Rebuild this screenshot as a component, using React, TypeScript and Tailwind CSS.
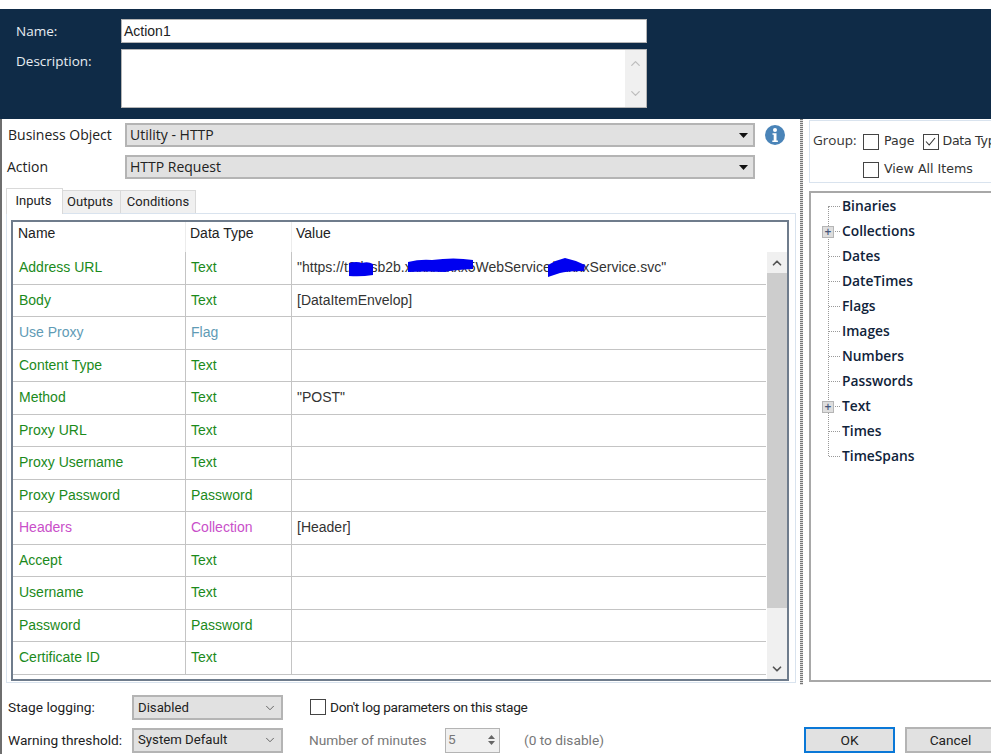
import React from 'react';
import { ChevronDown, ChevronUp } from 'lucide-react';

const rows = [
  { name: 'Address URL', type: 'Text', value: '"https://t2dcsb2b.xxxxxxxxx5WebService/xxxxxService.svc"', color: 'text-[#1b8a1b]' },
  { name: 'Body', type: 'Text', value: '[DataItemEnvelop]', color: 'text-[#1b8a1b]' },
  { name: 'Use Proxy', type: 'Flag', value: '', color: 'text-[#5f9bb5]' },
  { name: 'Content Type', type: 'Text', value: '', color: 'text-[#1b8a1b]' },
  { name: 'Method', type: 'Text', value: '"POST"', color: 'text-[#1b8a1b]' },
  { name: 'Proxy URL', type: 'Text', value: '', color: 'text-[#1b8a1b]' },
  { name: 'Proxy Username', type: 'Text', value: '', color: 'text-[#1b8a1b]' },
  { name: 'Proxy Password', type: 'Password', value: '', color: 'text-[#1b8a1b]' },
  { name: 'Headers', type: 'Collection', value: '[Header]', color: 'text-[#c94fc9]' },
  { name: 'Accept', type: 'Text', value: '', color: 'text-[#1b8a1b]' },
  { name: 'Username', type: 'Text', value: '', color: 'text-[#1b8a1b]' },
  { name: 'Password', type: 'Password', value: '', color: 'text-[#1b8a1b]' },
  { name: 'Certificate ID', type: 'Text', value: '', color: 'text-[#1b8a1b]' },
];

const tree = [
  { label: 'Binaries', plus: false },
  { label: 'Collections', plus: true },
  { label: 'Dates', plus: false },
  { label: 'DateTimes', plus: false },
  { label: 'Flags', plus: false },
  { label: 'Images', plus: false },
  { label: 'Numbers', plus: false },
  { label: 'Passwords', plus: false },
  { label: 'Text', plus: true },
  { label: 'Times', plus: false },
  { label: 'TimeSpans', plus: false },
];

const Caret = () => (
  <svg width="9" height="5" viewBox="0 0 9 5" className="shrink-0">
    <path d="M0 0h9L4.5 5z" fill="#111" />
  </svg>
);

const Combo = ({ label }: { label: string }) => (
  <div className="w-[630px] h-[24px] bg-[#e1e1e1] border-2 border-[#b4b4b4] flex items-center justify-between pl-[3px] pr-[5px] text-[14px] text-[#222]">
    <span className="pb-[2px]">{label}</span>
    <Caret />
  </div>
);

const FooterSelect = ({ label }: { label: string }) => (
  <div className="w-[151px] h-[25px] shrink-0 bg-[#e1e1e1] border-2 border-[#b4b4b4] flex items-center justify-between pl-[4px] pr-[4px] text-[13.2px] text-[#222]">
    <span>{label}</span>
    <ChevronDown size={14} strokeWidth={1.5} className="text-[#555]" />
  </div>
);

const Check = ({ checked }: { checked?: boolean }) => (
  <div className="w-[16px] h-[16px] border border-[#444] bg-white shrink-0 flex items-center justify-center">
    {checked && (
      <svg width="13" height="13" viewBox="0 0 13 13">
        <path d="M2 6.5l3.2 3.5L11 3" fill="none" stroke="#333" strokeWidth="1.1" />
      </svg>
    )}
  </div>
);

export default function App() {
  return (
    <div className="relative w-[991px] h-[754px] overflow-hidden bg-white text-[#222] font-['Open_Sans','Liberation_Sans',sans-serif]">
      {/* Header */}
      <div className="mt-[9px] h-[110px] bg-[#0f2b47] pl-[16px] pt-[10px] text-[13.5px] text-[#e8edf2]">
        <div className="flex items-center h-[24px]">
          <span className="w-[105px]">Name:</span>
          <div className="w-[526px] h-[24px] bg-white border border-[#b5b5b5] pl-[2px] text-[#222] text-[14px] leading-[22px] font-['Liberation_Sans',sans-serif]">Action1</div>
        </div>
        <div className="flex items-start mt-[6px]">
          <span className="w-[105px] pt-[2px]">Description:</span>
          <div className="w-[526px] h-[59px] bg-white border border-[#b5b5b5] flex justify-end">
            <div className="w-[21px] h-full bg-[#f0f0f0] flex flex-col items-center justify-between py-[6px] text-[#bdbdbd]">
              <ChevronUp size={15} strokeWidth={2} />
              <ChevronDown size={15} strokeWidth={2} />
            </div>
          </div>
        </div>
      </div>

      {/* Main */}
      <div className="flex h-[566px]">
        <div className="w-[800px] shrink-0 border-l-2 border-[#6e6e6e] pl-[3px] pt-[4px] relative">
          <div className="flex items-center">
            <span className="w-[120px] text-[14px] pl-[3px] pb-[2px]">Business Object</span>
            <Combo label="Utility - HTTP" />
            <svg width="20" height="20" viewBox="0 0 20 20" className="ml-[10px]">
              <circle cx="10" cy="10" r="10" fill="#4a84b8" />
              <circle cx="10" cy="5" r="2" fill="#fff" />
              <path d="M7.5 8.2h4v7.2h1.4v1.6H7.3v-1.6h1.4V9.8H7.5z" fill="#fff" />
            </svg>
          </div>
          <div className="flex items-center mt-[8px]">
            <span className="w-[120px] text-[14px] pl-[2px] pb-[2px]">Action</span>
            <Combo label="HTTP Request" />
          </div>

          {/* Tabs */}
          <div className="flex items-end h-[25px] mt-[9px] ml-[1px] text-[13px] relative z-10 font-['Roboto',sans-serif]">
            <div className="w-[57px] h-[26px] bg-white border border-b-0 border-[#d9d9d9] flex items-center justify-center pb-[2px] pr-[2px] -mb-[1px]">Inputs</div>
            <div className="w-[58px] h-[23px] bg-[#f0f0f0] border border-b-0 border-l-0 border-[#d9d9d9] flex items-center justify-center pr-[3px]">Outputs</div>
            <div className="w-[75px] h-[23px] bg-[#f0f0f0] border border-b-0 border-l-0 border-[#d9d9d9] flex items-center justify-center">Conditions</div>
          </div>

          {/* Panel */}
          <div className="w-[790px] h-[470px] ml-[1px] border border-[#d9e3ee] pl-[4px] pt-[6px] font-['Liberation_Sans',sans-serif] text-[14px]">
            <div className="relative w-[778px] h-[461px] border-2 border-[#6f7c8c] flex">
              <div className="w-[753px] shrink-0 overflow-hidden">
                <div className="flex h-[30px] items-center text-[#222]">
                  <span className="w-[173px] pl-[5px] h-full leading-[23px] border-r border-[#ececec]">Name</span>
                  <span className="w-[106px] pl-[4px] h-full leading-[23px] border-r border-[#ececec]">Data Type</span>
                  <span className="flex-1 pl-[4px] h-full leading-[23px]">Value</span>
                </div>
                {rows.map((row) => (
                  <div key={row.name} className="flex h-[32.5px] items-center border-b border-[#c4c4c4]">
                    <span className={`w-[173px] h-full pl-[6px] leading-[31px] border-r border-[#c4c4c4] ${row.color}`}>{row.name}</span>
                    <span className={`w-[106px] h-full pl-[5px] leading-[31px] border-r border-[#c4c4c4] ${row.color}`}>{row.type}</span>
                    <span className="flex-1 pl-[5px] h-full leading-[31px] text-[#333] whitespace-nowrap">{row.value}</span>
                  </div>
                ))}
              </div>
              <div className="ml-[1px] flex-1 flex flex-col mt-[30px] bg-[#f0f0f0]">
                <div className="h-[21px] flex items-center justify-center text-[#555]">
                  <ChevronUp size={14} strokeWidth={3} />
                </div>
                <div className="h-[335px] bg-[#cdcdcd]" />
                <div className="mt-auto h-[21px] flex items-center justify-center text-[#555]">
                  <ChevronDown size={14} strokeWidth={3} />
                </div>
              </div>
            </div>
          </div>
        </div>

        {/* Splitter */}
        <div className="w-[3px] h-[566px] bg-[repeating-linear-gradient(to_bottom,#777_0px,#777_1px,#ddd_1px,#ddd_2px)]" />

        {/* Right */}
        <div className="flex-1 pl-[6px] pt-[1px] min-w-0">
          <div className="w-[200px] h-[63px] border border-[#d9e3ee] pl-[3px] pt-[9px] text-[12.6px] font-['DejaVu_Sans',sans-serif] text-[#333]">
            <div className="flex items-center gap-[5px]">
              <span className="w-[44px] text-[13.5px] font-['Open_Sans',sans-serif] pb-[3px] mr-[1px]">Group:</span>
              <Check />
              <span className="pb-[1px]">Page</span>
              <span className="ml-[3px]"><Check checked /></span>
              <span className="whitespace-nowrap -ml-[1px] pb-[1px] tracking-[-0.3px]">Data Type</span>
            </div>
            <div className="flex items-center gap-[5px] mt-[7px] ml-[50px]">
              <Check />
              <span className="whitespace-nowrap pb-[1px]">View All Items</span>
            </div>
          </div>
          <div className="relative w-[200px] h-[491px] mt-[8px] border-2 border-[#a8a8a8] pt-[1px]">
            <div className="absolute left-[17px] top-[13px] h-[250px] border-l border-dotted border-[#999]" />
            {tree.map((item) => (
              <div key={item.label} className="relative flex items-center h-[25px] pl-[31px] text-[13.8px] font-semibold text-[#10233a]">
                <span className="absolute left-[18px] top-[12px] w-[11px] border-t border-dotted border-[#999]" />
                {item.plus && (
                  <span className="absolute left-[11px] top-[7px] w-[12px] h-[12px] bg-[#dedede] border border-[#b5b5b5] flex items-center justify-center text-[#44557a] text-[12px] leading-none">+</span>
                )}
                <span>{item.label}</span>
              </div>
            ))}
          </div>
        </div>
      </div>

      {/* Footer */}
      <div className="border-l-2 border-[#6e6e6e] h-[69px] pl-[6px] pt-[10px] text-[13.7px] font-['Roboto',sans-serif]">
        <div className="flex items-center h-[25px]">
          <span className="w-[124px] shrink-0">Stage logging:</span>
          <FooterSelect label="Disabled" />
          <div className="ml-[27px] flex items-center gap-[4px] whitespace-nowrap">
            <Check />
            <span className="tracking-[-0.3px]">Don't log parameters on this stage</span>
          </div>
        </div>
        <div className="flex items-center h-[26px] mt-[7px]">
          <span className="w-[124px] shrink-0 whitespace-nowrap">Warning threshold:</span>
          <FooterSelect label="System Default" />
          <span className="ml-[26px] w-[136px] shrink-0 text-[#777]">Number of minutes</span>
          <div className="w-[55px] h-[25px] shrink-0 bg-[#f0f0f0] border border-[#b4b4b4] flex justify-between pl-[2px] text-[#777]">
            <span>5</span>
            <div className="w-[16px] flex flex-col items-center justify-center gap-[2px]">
              <svg width="7" height="4" viewBox="0 0 7 4"><path d="M0 4h7L3.5 0z" fill="#666" /></svg>
              <svg width="7" height="4" viewBox="0 0 7 4"><path d="M0 0h7L3.5 4z" fill="#666" /></svg>
            </div>
          </div>
          <span className="ml-[24px] w-[280px] shrink-0 text-[#777]">(0 to disable)</span>
          <div className="w-[91px] h-[26px] bg-[#e1e1e1] border-2 border-[#0a78d7] flex items-center justify-center shrink-0">OK</div>
          <div className="w-[91px] h-[26px] ml-[10px] bg-[#e1e1e1] border-2 border-[#b4b4b4] flex items-center justify-center shrink-0">Cancel</div>
        </div>
      </div>

      {/* Redaction scribbles */}
      <svg className="absolute left-0 top-0 pointer-events-none" width="991" height="754">
        <path d="M349 263q8-2 13 0q6-2 11 1l0 11q-12 2-24 1z" fill="#0000f0" />
        <path d="M408 262q12-3 24-2q22-3 41 0l0 9q-20 1-28 3q-20-1-37 0z" fill="#0000f0" />
        <path d="M548 265q8-5 17-7q10 2 20 7l-1 6q-18 0-24 2l-12 4z" fill="#0000f0" />
      </svg>
    </div>
  );
}
